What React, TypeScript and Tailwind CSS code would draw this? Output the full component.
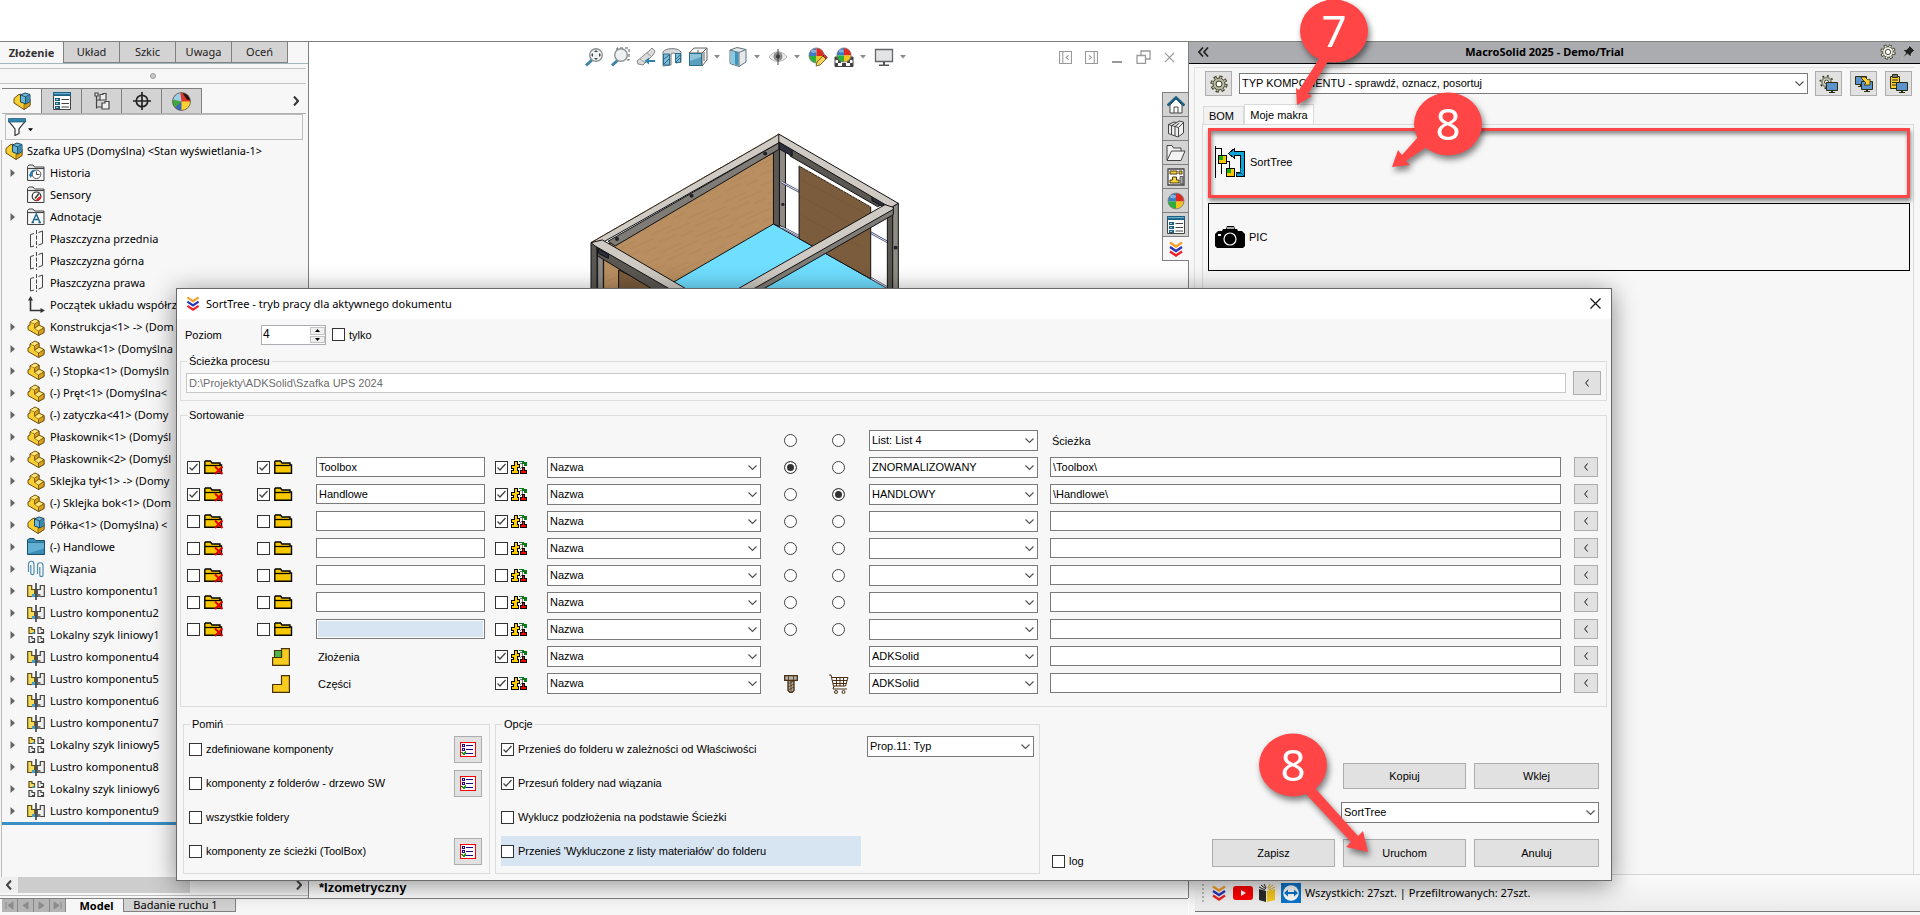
import type React from "react"
import { useState } from "react"

type IconProps = { className?: string }

interface TreeNode {
  label: string
  icon: React.ReactNode
  expandable?: boolean
}

interface SortRow {
  remove: boolean
  folder: boolean
  name: string
  sort: boolean
  mode: "" | "norm" | "trade"
  type: string
  path: string
}

/* ---------- icons ---------- */

const PartIcon = ({ className = "w-[18px] h-[18px]" }: IconProps) => (
  <svg viewBox="0 0 18 18" className={className} strokeLinejoin="round">
    <path d="M3 4 8 1l4 2v4l5 2.500v5L11.500 17.500 1 11.500V8l2-1z" fill="#f8cf33" stroke="#6a4b12" />
    <path d="M7.500 6 12 3v4l-4.500 3zM11.500 13 17 9.500v5l-5.500 3z" fill="#d9a21b" stroke="#6a4b12" strokeWidth=".8" />
    <path d="M3 4l4.500 2v4.500l4 2.500M7.500 10.500 12 7.500" fill="none" stroke="#8a671a" strokeWidth=".7" />
    <path d="M4 3.800 8 1.800l3 1.500-3.500 2zM8.500 10.500l3.500-2.400 3.500 1.700-4 2.400z" fill="#ffe680" />
  </svg>
)

const AssemblyIcon = ({ className = "w-[18px] h-[18px]" }: IconProps) => (
  <svg viewBox="0 0 18 18" className={className} strokeLinejoin="round">
    <path d="M1 6.500 5 3l3-1v8l4 1 5-4v6.500L11 17.500 1 11z" fill="#f8cf33" stroke="#6a4b12" />
    <path d="M11 12.500 17 9v4.500l-6 4z" fill="#d9a21b" stroke="#6a4b12" strokeWidth=".7" />
    <path d="M7.500 3 12 1l5 1.500v7L13 12l-5.500-2z" fill="#6bb5d6" stroke="#1d4a63" />
    <path d="M7.500 3l5 1.800L17 2.500M12.500 4.800V12" fill="none" stroke="#1d4a63" strokeWidth=".9" />
    <path d="M13 5.200 16.500 3.300v5.800L13 11.300z" fill="#3c87ac" />
  </svg>
)

const DocFolder = ({ children }: { children?: React.ReactNode }) => (
  <svg viewBox="0 0 18 18" className="w-[18px] h-[18px]">
    <path d="M.500 16.500V2.500L2 1h4l1.500 2H17v13.500z" fill="#e9e9e9" stroke="#444" />
    <path d="M.500 4.500H17" stroke="#444" />
    <path d="M2 6h14v9.500H2z" fill="#fafafa" />
    {children}
  </svg>
)

const HistoryIcon = () => (
  <DocFolder>
    <circle cx="9.500" cy="10.300" r="4.300" fill="#fff" stroke="#555" />
    <path d="M9.500 7.500v3h3" fill="none" stroke="#444" />
    <path d="M3.500 12c0-3 1.500-5 4-5.500" fill="none" stroke="#1f7bab" strokeWidth="1.800" />
    <path d="M1.700 10.500h4L3.700 14z" fill="#1f7bab" />
  </DocFolder>
)

const SensorIcon = () => (
  <DocFolder>
    <circle cx="9.500" cy="10.300" r="4.300" fill="#fff" stroke="#333" strokeWidth="1.200" />
    <path d="M13.800 10.300a4.300 4.300 0 0 1-4.300 4.300l.8-2z" fill="#e52520" stroke="#e52520" />
    <path d="M8 12.500l4-5" stroke="#333" strokeWidth="1.400" />
  </DocFolder>
)

const AnnotationIcon = () => (
  <DocFolder>
    <path d="M5.500 14.500 9.300 6l3.700 8.500M7 11.500h4.500M4.500 14.500h2.500M11.500 14.500h2.500" fill="none" stroke="#1f6a92" strokeWidth="1.500" />
  </DocFolder>
)

const PlaneIcon = () => (
  <svg viewBox="0 0 18 18" className="w-[18px] h-[18px]" fill="none" stroke="#444">
    <path d="M7 3.500 3.500 4.500v12.500l3.500-1M11.500 2.500l4-1.500v12.500l-4 1.500" />
    <path d="M9.500 0v18" strokeDasharray="4 1.500" />
  </svg>
)

const OriginIcon = () => (
  <svg viewBox="0 0 18 18" className="w-[18px] h-[18px]">
    <path d="M3.500 3v11.500H14" fill="none" stroke="#333" strokeWidth="1.600" />
    <path d="M3.500 0 6 4.500H1zM18 14.500 13.500 17v-5z" fill="#333" />
  </svg>
)

const BlueFolder = () => (
  <svg viewBox="0 0 18 18" className="w-[18px] h-[18px]">
    <path d="M.500 16.500V2L2 .500h5L8.500 2.500h9v14z" fill="#3b8db8" stroke="#1c4d68" />
    <path d="M1 4.500h16v6L1 15.500z" fill="#62b0d4" />
    <path d="M1 4.500h16" stroke="#1c4d68" strokeWidth=".6" />
  </svg>
)

const MatesIcon = () => (
  <svg viewBox="0 0 18 18" className="w-[18px] h-[18px]" fill="none" stroke="#4b8cab" strokeWidth="1.200">
    <path d="M1.500 12V4a2.500 2.500 0 0 1 5.500 0v9a1.600 1.600 0 0 1-3.200 0V5" />
    <path d="M10.500 14V5.500a2.500 2.500 0 0 1 5.500 0V15a1.600 1.600 0 0 1-3.200 0V7" />
  </svg>
)

const MirrorIcon = () => (
  <svg viewBox="0 0 18 18" className="w-[18px] h-[18px]">
    <path d="M.700 3.500h4v4h3v7h-7z" fill="#f7dc5c" stroke="#5a4a1a" strokeWidth="1.200" />
    <path d="M5 12h3v3H5z" fill="#3fa0d0" />
    <path d="M17.300 3.500h-4v4h-3v7h7z" fill="#efefef" stroke="#444" strokeWidth="1.200" />
    <path d="M10.500 12h3v3h-3z" fill="#777" />
    <path d="M9 1v17" stroke="#111" strokeWidth="1.300" />
  </svg>
)

const PatternIcon = () => (
  <svg viewBox="0 0 18 18" className="w-[18px] h-[18px]" strokeWidth="1.200">
    <path d="M2 1.500h3v2h2.500v4H2z" fill="#f7dc5c" stroke="#5a4a1a" />
    <path d="M5.500 6h2v2h-2z" fill="#3fa0d0" />
    <path d="M11 1.500h3v2h2.500v4H11zM2 10.500h3v2h2.500v4H2zM11 10.500h3v2h2.500v4H11z" fill="#eee" stroke="#444" />
    <path d="M14 6h2v1.500h-2zM5 15h2v1.500H5zM14 15h2v1.500h-2z" fill="#444" />
  </svg>
)

const PropertyIcon = () => (
  <svg viewBox="0 0 18 18" className="w-[18px] h-[18px]">
    <path d="M.500 .500h17v17H.500z" fill="#fff" stroke="#444" />
    <path d="M0 0h18v4H0z" fill="#1f5f82" />
    <path d="M1 1h16v1.200H1z" fill="#64b0d3" />
    <path d="M2 6h5v3H2zM2 10h5v3H2zM2 14h5v3H2z" fill="#1f5f82" />
    <path d="M3 7h2v1H3zM3 11h2v1H3zM3 15h2v1H3z" fill="#9ad2ec" />
    <path d="M8.500 7.500H16M8.500 11.500H16M8.500 15H16" stroke="#444" />
  </svg>
)

const ConfigIcon = () => (
  <svg viewBox="0 0 18 18" className="w-[18px] h-[18px]" fill="#eee" stroke="#444" strokeWidth="1.200">
    <path d="M3.500 4v12.500M3.500 8H7M3.500 15H9" fill="none" />
    <path d="M2 1h3v3H2zM7 2.500h3v-1h3V8H7zM9 11h3v-1.500h4V17H9z" />
  </svg>
)

const TargetIcon = () => (
  <svg viewBox="0 0 18 18" className="w-[18px] h-[18px]" fill="none" stroke="#222" strokeWidth="1.700">
    <circle cx="9" cy="9" r="5.700" />
    <path d="M9 0v18M0 9h18" />
  </svg>
)

const BallIcon = ({ className = "w-[18px] h-[18px]" }: IconProps) => (
  <svg viewBox="0 0 18 18" className={className}>
    <path d="M9 9.500V1a8 8 0 0 0-8 8.500z" fill="#3a7cc4" />
    <path d="M9 9.500h8A8 8 0 0 0 9 1z" fill="#e02a20" />
    <path d="M9 9.500H1A8 8 0 0 0 9 17z" fill="#2fae3a" />
    <path d="M9 9.500V17a8 8 0 0 0 8-7.500z" fill="#f2c21f" />
    <circle cx="9" cy="9" r="8" fill="none" stroke="#777" strokeWidth=".8" />
    <ellipse cx="6" cy="4.500" rx="3" ry="1.800" fill="#fff" opacity=".4" />
  </svg>
)

const DarkBallIcon = () => (
  <svg viewBox="0 0 18 18" className="w-[19px] h-[19px]">
    <circle cx="9" cy="9" r="8.500" fill="#e3372c" />
    <path d="M9 9 1 6.500A8.500 8.500 0 0 0 3 15z" fill="#3caa3f" />
    <path d="M9 9 3 15a8.500 8.500 0 0 0 6 2.500z" fill="#2e6fbf" />
    <path d="M9 9v8.500A8.500 8.500 0 0 0 17.500 9z" fill="#f7d333" />
    <path d="M1 7a8.500 8.500 0 0 1 7-6.400L9 9z" fill="#9ad0ea" />
    <path d="M10 1c4 0 7 3.500 7 7l-3-1z" fill="#2a1414" />
    <circle cx="9" cy="9" r="8.500" fill="none" stroke="#555" strokeWidth=".7" />
  </svg>
)

const FunnelIcon = () => (
  <svg viewBox="0 0 18 18" className="w-[18px] h-[18px]">
    <path d="M1 3.500h16L11 11v4.500l-4 2V11z" fill="#fff" stroke="#333" strokeWidth="1.200" />
    <path d="M.500 .500h17v3.500H.500z" fill="#2f86ac" stroke="#1d4f68" strokeWidth=".7" />
  </svg>
)

const LogoIcon = ({ className = "w-[14px] h-[14px]" }: IconProps) => (
  <svg viewBox="0 0 14 16" className={className} fill="none" strokeWidth="2.400">
    <path d="M1 1.500l6 4 6-4" stroke="#f7a02b" />
    <path d="M1 6l6 4 6-4" stroke="#2b35b8" />
    <path d="M1 10.500l6 4 6-4" stroke="#ee2222" />
  </svg>
)

const YellowFolder = ({ crossed = false }: { crossed?: boolean }) => (
  <svg viewBox="0 0 19 15" className="w-[19px] h-[15px]">
    <path d="M.800 13.200V1.800L1.500 1h5l1.500 2h8v2h1.500v8.200z" fill="#f7c800" stroke="#000" strokeWidth="1.400" />
    <path d="M1 5.500h15" stroke="#000" strokeWidth="1.300" />
    {crossed && <path d="M11 6.500l7.500 7.500M18.500 6.500l-7.500 7.500" stroke="#e00000" strokeWidth="2" />}
  </svg>
)

const SortIcon = () => (
  <svg viewBox="0 0 17 14" className="w-[17px] h-[14px]" shapeRendering="crispEdges">
    <path d="M3.500 1.500h3v3h2v3h-2v3h1v3h-7v-3h2V8h-2V5h3z" fill="#fc0" stroke="#000" />
    <path d="M8 1h5v1h3v4h-3V4h-2V2H8z" fill="#0a7a1a" />
    <path d="M9 3c2 0 3 2 2 4l-2 2" fill="none" stroke="#777" />
    <path d="M11.500 7.500h2v3h2v3h-6v-3h2z" fill="#f00" stroke="#000" />
  </svg>
)

const ListCheckIcon = () => (
  <svg viewBox="0 0 16 15" className="w-[16px] h-[15px]" shapeRendering="crispEdges">
    <path d="M.500 .500h15v14H.500z" fill="#fff" stroke="#f00" />
    <path d="M2.500 2.500h2v2h-2zM2.500 6.500h2v2h-2z" fill="none" stroke="#208" />
    <path d="M6 3.500h7M6 7.500h7M6 11.500h7" stroke="#208" />
    <path d="M2 10l2 2.500 2-3" fill="none" stroke="#1a9a1a" strokeWidth="1.500" />
  </svg>
)

const BoltIcon = () => (
  <svg viewBox="0 0 14 18" className="w-[14px] h-[18px]">
    <path d="M.700 .700h12.600v4.600H.700zM4 5.500h6v10l-2 2H6l-2-2z" fill="#b5b0a6" stroke="#4a2f14" strokeWidth="1.300" />
    <path d="M4.500 1v4M9.500 1v4M4 9l6-3M4 12l6-3M4 15l6-3M7 6v11" stroke="#4a2f14" strokeWidth=".8" />
  </svg>
)

const CartIcon = () => (
  <svg viewBox="0 0 20 20" className="w-[20px] h-[20px]" fill="none" stroke="#4a2f14">
    <path d="M0 1h2l2.500 11h12L19 3.500H3M3.500 6.500H18M4 9.500h13.500M7.500 3.500V12M11 3.500V12M14.500 3.500V12M5 12l-1 3h14" />
    <circle cx="7" cy="18" r="1.500" />
    <circle cx="14.500" cy="18" r="1.500" />
  </svg>
)

const GearIcon = ({ className = "w-[18px] h-[18px]", fill = "#b8b8a8" }: IconProps & { fill?: string }) => (
  <svg viewBox="-9 -9 18 18" className={className}>
    <circle r="6.800" fill="none" stroke="#3a3a1c" strokeWidth="3.600" strokeDasharray="3 2.340" />
    <circle r="6" fill={fill} stroke="#3a3a1c" />
    <circle r="6.600" fill="none" stroke={fill} strokeWidth="2" strokeDasharray="1.800 3.380" strokeDashoffset="-.6" />
    <circle r="3" fill="#fff" stroke="#3a3a1c" />
  </svg>
)

const Monitor = ({ x, y }: { x: number; y: number }) => (
  <g transform={`translate(${x} ${y})`}>
    <path d="M.500 .500h11v8H.500z" fill="#5b93cc" stroke="#2c2c10" />
    <path d="M5 9h2v1h2v1H3v-1h2z" fill="#2c2c10" />
  </g>
)

const MonitorGear = () => (
  <svg viewBox="0 0 20 20" className="w-[20px] h-[20px]">
    <circle cx="7.500" cy="8" r="5.500" fill="none" stroke="#3a3a1c" strokeWidth="3" strokeDasharray="1.600 2.700" />
    <circle cx="7.500" cy="8" r="4.500" fill="#ddd" stroke="#8d8d78" strokeWidth="2" />
    <circle cx="7.500" cy="8" r="2" fill="#fff" stroke="#3a3a1c" />
    <Monitor x={7} y={8} />
  </svg>
)

const MonitorCopy = () => (
  <svg viewBox="0 0 20 20" className="w-[20px] h-[20px]">
    <Monitor x={1} y={2} />
    <Monitor x={7} y={7} />
    <path d="M7 3h4l3 3 2-1v6h-6l2-2-4-4z" fill="#ffcf30" stroke="#2c2c10" strokeWidth=".8" />
  </svg>
)

const MonitorPaste = () => (
  <svg viewBox="0 0 20 20" className="w-[20px] h-[20px]">
    <path d="M1.500 2.500h9v12h-9z" fill="#ffcf30" stroke="#2c2c10" />
    <path d="M3.500 .500h5v3h-5z" fill="#777" stroke="#2c2c10" />
    <path d="M3 6h6M3 8.500h5M3 11h4" stroke="#2c2c10" />
    <Monitor x={7} y={8} />
  </svg>
)

const SortTreeIcon = () => (
  <svg viewBox="0 0 32 32" className="w-[32px] h-[32px]" shapeRendering="crispEdges">
    <path d="M1.500 0v32M1.500 2.500h6v25M8 15.500h7.500V22" fill="none" stroke="#000" />
    <path d="M4.500 9.500h8v8h-8zM12.500 22.500h8v8h-8z" fill="#f7c800" stroke="#000" />
    <path d="M5 10h4v4H5zM13 23h4v4h-4z" fill="#10b010" />
    <path d="M14.500 7.500l6-5v3h10v25h-8v-4h4V9.500h-6v3z" fill="#0fa5d6" stroke="#000" />
    <path d="M26 22v5h-4M26 26l4 4" fill="none" stroke="#06607e" />
  </svg>
)

const CameraIcon = () => (
  <svg viewBox="0 0 30 22" className="w-[30px] h-[22px]">
    <path d="M3 5h4l1-2h3l1-3h7l1 3h2l1 2h4l3 3v12l-2 2H2l-2-2V8z" />
    <path d="M12 2h7" stroke="#fff" strokeWidth="1.300" />
    <circle cx="15" cy="13" r="6" fill="none" stroke="#fff" strokeWidth="1.200" />
    <path d="M3 8h3v2H3z" fill="#fff" />
  </svg>
)

/* ---------- viewport toolbar ---------- */

const Caret = () => (
  <svg viewBox="0 0 6 4" className="mr-[2px] w-[6px] h-[4px]">
    <path d="M0 0h6L3 3.500z" fill="#8a8a8a" />
  </svg>
)

const ZoomIcon = ({ area = false }: { area?: boolean }) => (
  <svg viewBox="0 0 20 20" className="w-[20px] h-[20px]">
    <path d="M9 12 2 18.500" stroke="#3f83a6" strokeWidth="3" />
    {area && <path d="M7 3V1h12v12h-2" fill="none" stroke="#555" strokeDasharray="3 2" />}
    <circle cx={area ? 11 : 12} cy="8" r="6.300" fill="#edf1f2" stroke="#8b9397" strokeWidth="1.400" />
    {!area && <path d="M12 3l2 2h-4zM12 13l2-2h-4zM7 8l2-2v4zM17 8l-2-2v4z" fill="#444" />}
  </svg>
)

const PrevViewIcon = () => (
  <svg viewBox="0 0 20 20" className="w-[20px] h-[20px]">
    <path d="M1 14 13 4l3-3 3 3-2 4L7 18l-5-1z" fill="#dcdcdc" stroke="#888" />
    <path d="M4 12l5 4M11 6l5 4" stroke="#999" />
    <path d="M19 13h-6v-2.500L8.500 14l4.500 3.500V15h6z" fill="#2d83ad" />
  </svg>
)

const SectionIcon = () => (
  <svg viewBox="0 0 20 20" className="w-[20px] h-[20px]">
    <path d="M1 5c2-4 15-5 18 0v10l-5 1V7c-1-1-4-1-5 0v11l-8 1z" fill="#d6d9db" stroke="#777" />
    <path d="M1.500 7h6v11h-6zM13.500 6.500h5v9h-5z" fill="#7dbbd6" stroke="#2d6d8c" />
    <path d="M2 12l5-4M2 17l5-5M14 12l4-4M14 15l4-4" stroke="#2d6d8c" />
  </svg>
)

const OrientationIcon = () => (
  <svg viewBox="0 0 20 20" className="w-[20px] h-[20px]">
    <path d="M6 1h13v12l-5 6V6H1z" fill="#f4f4f4" stroke="#666" />
    <path d="M1 6l5-5M14 6l5-5M10 3v6M16 5v9" stroke="#666" />
    <path d="M1.500 6.500h12v12h-12z" fill="#5b9fbf" stroke="#2d6d8c" />
    <path d="M2 7h11v3L2 14z" fill="#8fc4db" />
  </svg>
)

const DisplayIcon = () => (
  <svg viewBox="0 0 20 20" className="w-[20px] h-[20px]">
    <path d="M2 3l7-2.500 9 2v12.500l-7 4.500-9-3z" fill="#e6e8e9" stroke="#5f7480" />
    <path d="M2.500 3.500 10 5.500v13L2.500 16z" fill="#8cc8de" />
    <path d="M7 4.800l3.500 .8v13l-3.500-1z" fill="#3b94ba" />
    <path d="M2 3l9 2.500 7-3M11 5.500v14" fill="none" stroke="#5f7480" />
  </svg>
)

const EyeIcon = () => (
  <svg viewBox="0 0 20 20" className="w-[20px] h-[20px]">
    <path d="M1 10c5-7 13-7 18 0-5 6-13 6-18 0z" fill="#ededed" stroke="#b5b5b5" />
    <circle cx="10" cy="9.500" r="4.500" fill="#8c8c8c" />
    <circle cx="10" cy="9.500" r="2" fill="#333" />
    <path d="M10 2v16" stroke="#444" />
  </svg>
)

const AppearanceIcon = () => (
  <span className="relative block w-[20px] h-[20px]">
    <BallIcon className="w-[17px] h-[17px]" />
    <svg viewBox="0 0 20 20" className="absolute inset-0 w-[20px] h-[20px]">
      <path d="M8 19l1-4 6-6 3 3-6 6z" fill="#f6d257" stroke="#5a4a1a" strokeWidth=".8" />
      <path d="M15 9l1.500-1.500 3 3L18 12z" fill="#d9382c" stroke="#5a1a1a" strokeWidth=".6" />
    </svg>
  </span>
)

const SceneIcon = () => (
  <span className="relative block w-[20px] h-[20px]">
    <svg viewBox="0 0 20 20" className="absolute inset-0 w-[20px] h-[20px]">
      <path d="M1 10h18v9.500H1z" fill="#fff" stroke="#444" />
      <path d="M1 10h4v3H1zM15 10h4v3h-4zM4 13h3v3H4zM13 13h3v3h-3zM1 16h3v3H1zM8 16h4v3H8zM16 16h3v3h-3z" fill="#444" />
    </svg>
    <BallIcon className="relative mx-auto w-[16px] h-[16px]" />
  </span>
)

const ScreenIcon = () => (
  <svg viewBox="0 0 20 20" className="w-[20px] h-[20px]">
    <path d="M1.500 2.500h17v12h-17z" fill="#e2e4e6" stroke="#666" strokeWidth="1.300" />
    <path d="M9 15h2v2.500h4V19H5v-1.500h4z" fill="#555" />
  </svg>
)

/* ---------- side strip icons ---------- */

const HomeIcon = () => (
  <svg viewBox="0 0 18 18" className="w-[18px] h-[18px]">
    <path d="M3 9v8h12V9L9 3z" fill="#fff" stroke="#444" />
    <path d="M7 17v-6h4v6" fill="none" stroke="#444" />
    <path d="M.500 9.500 9 1.500l8.500 8" fill="none" stroke="#1f5f82" strokeWidth="2.600" />
  </svg>
)

const BooksIcon = () => (
  <svg viewBox="0 0 18 18" className="w-[18px] h-[18px]" fill="#eee" stroke="#444">
    <path d="M1.500 4.500 7 2l3 .5L12 1l4.500 1V13L11 17 1.500 13.500z" />
    <path d="M1.500 4.500 4.500 5.500v9M4.500 5.500 10 2.500M4.500 5.500l3.500 1V16M8 6.500l4.500-3.500M8 6.500l3.500 1V17M11.500 7.500l5-5" fill="none" />
  </svg>
)

const OpenFolderIcon = () => (
  <svg viewBox="0 0 20 18" className="w-[20px] h-[18px]" fill="#f3f3f3" stroke="#444">
    <path d="M1 16V1.500h5L7.500 4H15v3" />
    <path d="M1 16.500 5.500 7H19l-4 9.500z" />
  </svg>
)

const PaletteIcon = () => (
  <svg viewBox="0 0 18 18" className="w-[18px] h-[18px]">
    <path d="M1 1h16v16H1z" fill="#fff" stroke="#444" strokeWidth="1.300" />
    <path d="M3 3h7v3H3zM12 3h3v3h-3zM3 15v-3h2.500V9h4v3H12v3z" fill="#f7d333" stroke="#4a3a12" />
    <path d="M13 8.500h3V16h-3z" fill="#aaa" stroke="#444" strokeWidth=".8" />
  </svg>
)

/* ---------- form controls ---------- */

const CheckBox = ({ checked = false, label }: { checked?: boolean; label?: string }) => (
  <span className="relative block w-[13px] h-[13px] shrink-0">
    <input
      type="checkbox"
      defaultChecked={checked}
      aria-label={label}
      className="peer block w-[13px] h-[13px] appearance-none border border-[#333] bg-white"
    />
    <svg
      viewBox="0 0 13 13"
      className="pointer-events-none absolute inset-0 hidden w-[13px] h-[13px] peer-checked:block"
      fill="none"
      stroke="#444"
      strokeWidth="1.300"
    >
      <path d="M2.500 6.500 5 9l5.500-6" />
    </svg>
  </span>
)

const Radio = ({ name, checked = false, label }: { name: string; checked?: boolean; label: string }) => (
  <input
    type="radio"
    name={name}
    defaultChecked={checked}
    aria-label={label}
    className="block w-[13px] h-[13px] appearance-none rounded-full border border-[#444] bg-white checked:bg-[#333] checked:shadow-[inset_0_0_0_2px_#fff]"
  />
)

const Combo = ({ value, label, className = "" }: { value: string; label: string; className?: string }) => (
  <span className={`relative block ${className}`}>
    <select
      aria-label={label}
      defaultValue={value}
      className="block h-[21px] w-full appearance-none border border-[#7a7a7a] bg-white pl-[2px] pb-[2px] text-[11px] leading-[16px] text-black"
    >
      <option>{value}</option>
    </select>
    <svg
      viewBox="0 0 9 6"
      className="pointer-events-none absolute right-[4px] top-[8px] w-[9px] h-[6px]"
      fill="none"
      stroke="#555"
      strokeWidth="1.200"
    >
      <path d="M.500 .500l4 4 4-4" />
    </svg>
  </span>
)

const PushButton = ({ children, className = "", label }: { children: React.ReactNode; className?: string; label?: string }) => (
  <button
    type="button"
    aria-label={label}
    className={`flex items-center justify-center border border-[#adadad] bg-[#e1e1e1] text-[11px] hover:bg-[#e5f1fb] ${className}`}
  >
    {children}
  </button>
)

const LessThan = () => (
  <svg viewBox="0 0 4 8" className="w-[4px] h-[8px]" fill="none" stroke="#111">
    <path d="M3.500 .500 .700 4l2.800 3.500" />
  </svg>
)

const Group = ({ title, className = "", children }: { title: string; className?: string; children: React.ReactNode }) => (
  <fieldset className={`min-w-0 border border-[#dcdcdc] ${className}`}>
    <legend className="ml-[6px] px-[2px] text-[11px] leading-[14px]">{title}</legend>
    {children}
  </fieldset>
)

/* ---------- left panel ---------- */

const tree: TreeNode[] = [
  { label: "Historia", icon: <HistoryIcon />, expandable: true },
  { label: "Sensory", icon: <SensorIcon /> },
  { label: "Adnotacje", icon: <AnnotationIcon />, expandable: true },
  { label: "Płaszczyzna przednia", icon: <PlaneIcon /> },
  { label: "Płaszczyzna górna", icon: <PlaneIcon /> },
  { label: "Płaszczyzna prawa", icon: <PlaneIcon /> },
  { label: "Początek układu współrz", icon: <OriginIcon /> },
  { label: "Konstrukcja<1> -> (Dom", icon: <PartIcon />, expandable: true },
  { label: "Wstawka<1> (Domyślna", icon: <PartIcon />, expandable: true },
  { label: "(-) Stopka<1> (Domyśln", icon: <PartIcon />, expandable: true },
  { label: "(-) Pręt<1> (Domyślna<", icon: <PartIcon />, expandable: true },
  { label: "(-) zatyczka<41> (Domy", icon: <PartIcon />, expandable: true },
  { label: "Płaskownik<1> (Domyśl", icon: <PartIcon />, expandable: true },
  { label: "Płaskownik<2> (Domyśl", icon: <PartIcon />, expandable: true },
  { label: "Sklejka tył<1> -> (Domy", icon: <PartIcon />, expandable: true },
  { label: "(-) Sklejka bok<1> (Dom", icon: <PartIcon />, expandable: true },
  { label: "Półka<1> (Domyślna) <", icon: <AssemblyIcon />, expandable: true },
  { label: "(-) Handlowe", icon: <BlueFolder />, expandable: true },
  { label: "Wiązania", icon: <MatesIcon />, expandable: true },
  { label: "Lustro komponentu1", icon: <MirrorIcon />, expandable: true },
  { label: "Lustro komponentu2", icon: <MirrorIcon />, expandable: true },
  { label: "Lokalny szyk liniowy1", icon: <PatternIcon />, expandable: true },
  { label: "Lustro komponentu4", icon: <MirrorIcon />, expandable: true },
  { label: "Lustro komponentu5", icon: <MirrorIcon />, expandable: true },
  { label: "Lustro komponentu6", icon: <MirrorIcon />, expandable: true },
  { label: "Lustro komponentu7", icon: <MirrorIcon />, expandable: true },
  { label: "Lokalny szyk liniowy5", icon: <PatternIcon />, expandable: true },
  { label: "Lustro komponentu8", icon: <MirrorIcon />, expandable: true },
  { label: "Lokalny szyk liniowy6", icon: <PatternIcon />, expandable: true },
  { label: "Lustro komponentu9", icon: <MirrorIcon />, expandable: true },
]

const featureTabs = [
  { name: "Drzewo", icon: <AssemblyIcon /> },
  { name: "Właściwości", icon: <PropertyIcon /> },
  { name: "Konfiguracje", icon: <ConfigIcon /> },
  { name: "Wymiary", icon: <TargetIcon /> },
  { name: "Wygląd", icon: <DarkBallIcon /> },
]

const LeftPanel = () => {
  const [tab, setTab] = useState("Złożenie")

  return (
    <aside className="flex w-[309px] shrink-0 flex-col border-r border-[#808080] bg-[#f7f7f7]">
      <div className="flex h-[22px] border-b border-[#9fb8bc]">
        {["Złożenie", "Układ", "Szkic", "Uwaga", "Oceń"].map((name) => (
          <button
            key={name}
            type="button"
            onClick={() => setTab(name)}
            className={`border-r border-[#808080] text-center ${
              tab === name ? "w-[64px] bg-[#f7f7f7] font-bold text-[#333]" : "w-[56px] border-b bg-[#d3d3d3] text-[#222]"
            }`}
          >
            {name}
          </button>
        ))}
      </div>
      <div className="mt-[4px] mr-[2px] flex h-[16px] items-center justify-center border-y border-[#c4c4c4]">
        <span className="h-[6px] w-[6px] rounded-full border border-[#999] bg-[#ccc]" />
      </div>
      <div className="mt-[4px] ml-[2px] mr-[2px] flex h-[26px] border-b border-[#b0b0b0]">
        {featureTabs.map((item, i) => (
          <button
            key={item.name}
            type="button"
            aria-label={item.name}
            className={`flex w-[40px] items-center justify-center border-t border-r border-[#808080] ${
              i === 0 ? "bg-[#f7f7f7]" : "bg-[#d3d3d3]"
            }`}
          >
            {item.icon}
          </button>
        ))}
        <button type="button" aria-label="Więcej" className="mr-[7px] ml-auto">
          <svg viewBox="0 0 6 10" className="w-[6px] h-[10px]" fill="none" stroke="#333" strokeWidth="2">
            <path d="M1 .500 5 5 1 9.500" />
          </svg>
        </button>
      </div>
      <div className="mx-[5px] flex h-[26px] items-center gap-[2px] border border-[#bdbdbd] pl-[2px]">
        <FunnelIcon />
        <svg viewBox="0 0 6 4" className="mt-[6px] w-[5px] h-[4px]">
          <path d="M0 0h6L3 3.500z" />
        </svg>
      </div>

      <div className="ml-px flex-1 border-l border-[#bbb]">
        <div className="flex h-[22px] items-center gap-[4px] pl-[3px] whitespace-nowrap">
          <AssemblyIcon />
          Szafka UPS (Domyślna) &lt;Stan wyświetlania-1&gt;
        </div>
        <ul className="mr-[132px] overflow-hidden">
          {tree.map((node) => (
            <li key={node.label} className="flex h-[22px] items-center pl-[8px] whitespace-nowrap">
              <span className="w-[17px] shrink-0">
                {node.expandable && (
                  <svg viewBox="0 0 5 8" className="w-[5px] h-[8px]">
                    <path d="M.500 0v8L5 4z" fill="#666" />
                  </svg>
                )}
              </span>
              <span className="shrink-0">{node.icon}</span>
              <span className="ml-[5px]">{node.label}</span>
            </li>
          ))}
        </ul>
        <div className="h-[3px] bg-[#3a8fc4]" />
      </div>

      <div className="mb-[2px] flex h-[16px] items-center bg-[#efefef] px-[6px]">
        <svg viewBox="0 0 6 10" className="w-[6px] h-[10px]" fill="none" stroke="#444" strokeWidth="2">
          <path d="M5 .500 1 5l4 4.500" />
        </svg>
        <span className="ml-[6px] h-[16px] w-[172px] bg-[#cdcdcd]" />
        <svg viewBox="0 0 6 10" className="ml-auto w-[6px] h-[10px]" fill="none" stroke="#444" strokeWidth="2">
          <path d="M1 .500 5 5 1 9.500" />
        </svg>
      </div>
      <div className="h-[3px] border-t border-[#bdbdbd]" />
    </aside>
  )
}

/* ---------- 3D model ---------- */

const CabinetModel = () => (
  <svg viewBox="80 300 940 477" className="w-[313px] h-[159px]" stroke="#111" strokeWidth="3">
    <defs>
      <pattern id="wood" width="120" height="60" patternUnits="userSpaceOnUse" patternTransform="rotate(-24)">
        <path d="M0 0h120v60H0z" fill="#b98f61" stroke="none" />
        <path d="M0 12h70M40 26h80M10 42h60M80 52h40" stroke="#b2875a" strokeWidth="3" />
      </pattern>
    </defs>
    <path d="M130 650 645 365v220L310 777H130z" fill="url(#wood)" />
    <path d="M640 582 985 777H305z" fill="#70deff" />
    <path d="M640 345h18v245l-18-8z" fill="#5b5753" />
    <path d="M658 340h18v255l-18-9z" fill="#8e8a85" />
    <g stroke="#444a66" strokeWidth="7">
      <path d="M666 457l52 28M666 592l52 27M932 608l52 29M932 744l52 30" />
      <path d="M666 457l52 28M666 592l52 27M932 608l52 29M932 744l52 30" stroke="#e3e6fa" strokeWidth="3" />
    </g>
    <path d="M717 408 932 531v216L717 626z" fill="#7b5c3d" />
    <path d="M718 408 932 531" stroke="#d8a868" strokeWidth="2" strokeDasharray="5 5" />
    <path d="M725 450l190 100M722 500l200 105M722 555l180 95" stroke="#735539" strokeWidth="2" />
    <path d="M690 350 978 518l-25 12L690 378z" fill="#5b5753" />
    <path d="M656 336l40 22v20l-40-22zM936 498l36 20v14l-36-20z" fill="#2c2f3d" />
    <path d="M656 312 1015 520l-22 14L640 326z" fill="#cfcac3" />
    <path d="M656 338v20L165 648l-22-14z" fill="#7f7b76" />
    <path d="M656 312v26L112 646l-20-8 552-318z" fill="#cfcac3" />
    <path d="M656 312 92 638" stroke="#6a4722" strokeDasharray="4 4" />
    <path d="M982 540h17v237h-17z" fill="#5b5753" />
    <path d="M998 530l17-10v257h-17z" fill="#8e8a85" />
    <path d="M1000 532v22L610 777h-60z" fill="#7f7b76" />
    <path d="M975 524l25 8v6L580 777h-47z" fill="#cfcac3" />
    <path d="M92 638h18v139H92z" fill="#5b5753" />
    <path d="M112 660h17v117h-17z" fill="#8e8a85" />
    <path d="M175 720 290 777H175z" fill="#7b5c3d" />
    <path d="M110 645 345 777h-70L112 678z" fill="#5b5753" />
    <path d="M112 655l32 18v12l-28-14z" fill="#2c2f3d" />
    <path d="M92 638l34-8 252 147h-50L104 648z" fill="#cfcac3" />
    <g fill="#222" stroke="none">
      <circle cx="615" cy="370" r="6" />
      <circle cx="394" cy="497" r="6" />
      <circle cx="170" cy="627" r="6" />
      <circle cx="668" cy="523" r="5" />
      <circle cx="1007" cy="653" r="6" />
    </g>
  </svg>
)

const Viewport = () => (
  <main className="relative min-w-0 flex-1 border-r border-[#808080] bg-white">
    <div className="flex h-[30px] items-center pl-[275px]">
      <div className="flex items-center gap-[6px]">
        <ZoomIcon />
        <ZoomIcon area />
        <PrevViewIcon />
        <SectionIcon />
        <OrientationIcon />
        <Caret />
        <DisplayIcon />
        <Caret />
        <EyeIcon />
        <Caret />
        <AppearanceIcon />
        <SceneIcon />
        <Caret />
        <ScreenIcon />
        <Caret />
      </div>
      <div className="mr-[13px] ml-auto flex items-center gap-[13px]">
        <svg viewBox="0 0 12 12" className="w-[13px] h-[13px]" fill="none" stroke="#999">
          <path d="M.500 .500h11v11H.500zM3.500 1v10M9 4 6.500 6 9 8" />
        </svg>
        <svg viewBox="0 0 12 12" className="w-[13px] h-[13px]" fill="none" stroke="#999">
          <path d="M.500 .500h11v11H.500zM8.500 1v10M3.500 4 6 6 3.500 8" />
        </svg>
        <svg viewBox="0 0 12 12" className="w-[12px] h-[12px]" stroke="#999" strokeWidth="2">
          <path d="M1 11h10" />
        </svg>
        <svg viewBox="0 0 15 14" className="w-[15px] h-[14px]" fill="none" stroke="#999" strokeWidth="1.300">
          <path d="M1 5.500h8.500v8H1zM5 5V1h9v8h-4" />
        </svg>
        <svg viewBox="0 0 12 12" className="w-[11px] h-[11px]" stroke="#999" strokeWidth="1.400">
          <path d="M1 1l10 10M11 1 1 11" />
        </svg>
      </div>
    </div>
    <div className="flex justify-center pt-[58px] pr-[11px]">
      <CabinetModel />
    </div>
    <nav className="absolute top-[50px] right-0 w-[26px] border-t border-l border-[#808080]">
      {[<HomeIcon />, <BooksIcon />, <OpenFolderIcon />, <PaletteIcon />, <BallIcon />, <PropertyIcon />].map((icon, i) => (
        <button key={i} type="button" aria-label={`Panel ${i + 1}`} className="flex h-[24px] w-[25px] items-center justify-center border-b border-[#808080] bg-[#d3d3d3]">
          {icon}
        </button>
      ))}
      <button type="button" aria-label="MacroSolid" className="flex h-[24px] w-[26px] items-center justify-center border-b border-[#808080] bg-[#f7f7f7]">
        <LogoIcon className="w-[14px] h-[18px]" />
      </button>
    </nav>
    <p className="absolute bottom-0 left-[10px] font-['Liberation_Sans',sans-serif] text-[13px] leading-[20px] font-bold">*Izometryczny</p>
  </main>
)

/* ---------- right panel ---------- */

const RightPanel = () => (
  <section className="flex w-[731px] shrink-0 flex-col bg-[#f7f7f7]">
    <header className="flex h-[22px] items-center border-b border-black bg-[#abacb0] pr-[5px] pb-px pl-[9px]">
      <svg viewBox="0 0 11 10" className="w-[11px] h-[10px]" fill="none" stroke="#222" strokeWidth="1.700">
        <path d="M5 .500 1 5l4 4.500M10 .500 6 5l4 4.500" />
      </svg>
      <h1 className="flex-1 text-center font-bold">MacroSolid 2025 - Demo/Trial</h1>
      <GearIcon className="w-[16px] h-[16px]" fill="#eee" />
      <svg viewBox="0 0 14 14" className="ml-[5px] w-[14px] h-[14px]">
        <path d="M8 0l6 6-2 .500-2 2.500v3L6.500 9 1 13.500 5 8 2 4.500h3.500L8 2z" fill="#222" stroke="#ddd" strokeWidth=".5" />
      </svg>
    </header>
    <div className="mt-[3px] mr-[6px] ml-[5px] flex flex-1 flex-col border-t border-l border-[#e2e2e2] pt-[3px] pl-[7px] font-['Liberation_Sans',sans-serif] text-[11px]">
      <div className="flex items-center pr-[2px] pl-[3px]">
        <PushButton className="h-[25px] w-[27px]" label="Ustawienia">
          <GearIcon />
        </PushButton>
        <Combo label="Makro" value="TYP KOMPONENTU - sprawdź, oznacz, posortuj" className="ml-[7px] flex-1" />
        <div className="ml-[7px] flex gap-[8px]">
          <PushButton className="h-[25px] w-[27px]" label="Konfiguruj">
            <MonitorGear />
          </PushButton>
          <PushButton className="h-[25px] w-[27px]" label="Kopiuj ustawienia">
            <MonitorCopy />
          </PushButton>
          <PushButton className="h-[25px] w-[27px]" label="Wklej ustawienia">
            <MonitorPaste />
          </PushButton>
        </div>
      </div>
      <div className="mt-[8px] flex items-end pl-px">
        <button type="button" className="h-[18px] w-[41px] border border-b-0 border-[#dadada] bg-[#f2f2f2] pr-[4px]">
          BOM
        </button>
        <button type="button" className="h-[20px] w-[70px] border border-b-0 border-[#dadada] bg-white">
          Moje makra
        </button>
      </div>
      <div className="flex-1 border border-b-0 border-[#dadada] bg-[#f7f7f7] py-[3px] pr-[3px] pl-[5px]">
        <button
          type="button"
          className="flex h-[70px] w-full items-center gap-[4px] border-[3px] border-[#ff4545] px-[3px] pb-[2px] shadow-[1px_3px_4px_rgba(0,0,0,0.45),inset_1px_3px_4px_rgba(0,0,0,0.45)]"
        >
          <SortTreeIcon />
          SortTree
        </button>
        <button type="button" className="mt-[5px] flex h-[68px] w-full items-center gap-[4px] border border-black px-[6px] pb-px">
          <CameraIcon />
          PIC
        </button>
      </div>
    </div>
    <footer className="mb-[3px] ml-[6px] flex h-[38px] items-center gap-[4px] border-t border-b border-t-[#d5d5d5] border-b-[#777] bg-linear-to-b from-[#fafafa] to-[#ececec] pl-[7px]">
      <span className="h-[18px] w-[3px] border-l-2 border-dotted border-[#bbb]" />
      <LogoIcon className="mx-[3px] w-[14px] h-[18px]" />
      <svg viewBox="0 0 20 14" className="w-[20px] h-[14px]">
        <rect width="20" height="14" rx="3" fill="#f00" />
        <path d="M8 4v6l5-3z" fill="#fff" />
      </svg>
      <svg viewBox="0 0 18 18" className="mx-px w-[18px] h-[18px]">
        <path d="M1 5l7 2v11l-7-2z" fill="#2b2b2b" />
        <path d="M17 5 9 7v11l8-2z" fill="#f4cb1d" />
        <path d="M3 1l5 4M1 3l6 3M6 0l2 4" stroke="#222" />
        <path d="M15 1l-5 4M17 3l-6 3M12 0l-2 4" stroke="#d5ab10" />
      </svg>
      <svg viewBox="0 0 20 20" className="w-[20px] h-[20px]">
        <rect width="20" height="20" fill="#0c76cf" />
        <circle cx="10" cy="10" r="7.800" fill="#fff" />
        <path d="M3 10l4-3.500V9h6V6.500l4 3.500-4 3.500V11H7v2.500z" fill="#0c76cf" />
      </svg>
      <span>Wszystkich: 27szt. | Przefiltrowanych: 27szt.</span>
    </footer>
  </section>
)

/* ---------- SortTree dialog ---------- */

const emptyRow: SortRow = { remove: false, folder: false, name: "", sort: false, mode: "", type: "", path: "" }

const sortRows: SortRow[] = [
  { remove: true, folder: true, name: "Toolbox", sort: true, mode: "norm", type: "ZNORMALIZOWANY", path: "\\Toolbox\\" },
  { remove: true, folder: true, name: "Handlowe", sort: true, mode: "trade", type: "HANDLOWY", path: "\\Handlowe\\" },
  { ...emptyRow, sort: true },
  emptyRow,
  emptyRow,
  emptyRow,
  emptyRow,
]

const rowGrid = "grid h-[27px] grid-cols-[70px_59px_179px_52px_237px_48px_37px_181px_1fr_24px] items-center"

const textBox = "mb-px block h-[20px] border border-[#7a7a7a] px-[2px] text-[11px]"

const skipOptions = [
  { label: "zdefiniowane komponenty", button: true },
  { label: "komponenty z folderów - drzewo SW", button: true },
  { label: "wszystkie foldery", button: false },
  { label: "komponenty ze ścieżki (ToolBox)", button: true },
]

const moveOptions = [
  { label: "Przenieś do folderu w zależności od Właściwości", checked: true },
  { label: "Przesuń foldery nad wiązania", checked: true },
  { label: "Wyklucz podzłożenia na podstawie Ścieżki", checked: false },
  { label: "Przenieś 'Wykluczone z listy materiałów' do folderu", checked: false },
]

const PathCells = ({ path, label }: { path: string; label: string }) => (
  <>
    <input type="text" aria-label={`Ścieżka ${label}`} defaultValue={path} className={`${textBox} mr-[13px] bg-white`} />
    <PushButton className="mb-px h-[20px]" label={`Wybierz ścieżkę ${label}`}>
      <LessThan />
    </PushButton>
  </>
)

const SortTreeDialog = () => (
  <div
    role="dialog"
    aria-label="SortTree"
    className="absolute top-[288px] right-[308px] left-[176px] border border-[#6a6a6a] bg-[#f7f7f7] font-['Liberation_Sans',sans-serif] text-[11px] leading-[14px] shadow-[0_4px_24px_rgba(0,0,0,0.45)]"
  >
    <div className="flex h-[30px] items-center bg-white pr-[10px] pb-px pl-[9px] font-['Noto_Sans',sans-serif] text-[11px]">
      <LogoIcon className="w-[14px] h-[15px]" />
      <h2 className="ml-[6px]">SortTree - tryb pracy dla aktywnego dokumentu</h2>
      <button type="button" aria-label="Zamknij" className="ml-auto">
        <svg viewBox="0 0 11 11" className="w-[11px] h-[11px]" stroke="#111" strokeWidth="1.200">
          <path d="M.500 .500l10 10M10.500 .500l-10 10" />
        </svg>
      </button>
    </div>

    <div className="pt-[6px] pr-[4px] pb-[6px] pl-[3px]">
      <div className="flex h-[20px] items-center pl-[5px]">
        <label htmlFor="level" className="w-[76px]">
          Poziom
        </label>
        <span className="flex h-[20px] w-[65px] border border-[#abadb3] bg-white">
          <input id="level" type="text" defaultValue="4" className="w-[48px] px-px pb-[2px] text-[12px]" />
          <span className="flex w-[15px] flex-col gap-px py-px">
            <button type="button" aria-label="Więcej" className="flex flex-1 items-center justify-center border border-[#c5c5c5] bg-[#efefef]">
              <svg viewBox="0 0 5 3" className="w-[5px] h-[3px]">
                <path d="M0 3h5L2.500 0z" />
              </svg>
            </button>
            <button type="button" aria-label="Mniej" className="flex flex-1 items-center justify-center border border-[#c5c5c5] bg-[#efefef]">
              <svg viewBox="0 0 5 3" className="w-[5px] h-[3px]">
                <path d="M0 0h5L2.500 3z" />
              </svg>
            </button>
          </span>
        </span>
        <label className="ml-[6px] flex items-center gap-[4px] pb-px">
          <CheckBox />
          tylko
        </label>
      </div>

      <Group title="Ścieżka procesu" className="mt-[9px]">
        <div className="flex items-center pt-[3px] pr-[5px] pb-[5px] pl-[5px]">
          <input
            type="text"
            readOnly
            aria-label="Ścieżka procesu"
            defaultValue="D:\Projekty\ADKSolid\Szafka UPS 2024"
            className="h-[20px] min-w-0 flex-1 border border-[#c8c8c8] bg-white px-[2px] text-[#6d6d6d]"
          />
          <PushButton className="ml-[7px] h-[24px] w-[28px]" label="Wybierz folder">
            <LessThan />
          </PushButton>
        </div>
      </Group>

      <Group title="Sortowanie" className="mt-[7px]">
        <div className="pt-[5px] pr-[8px] pb-[9px] pl-[6px]">
          <div className={rowGrid}>
            <span className="col-start-6">
              <Radio name="norm" label="Brak znormalizowanych" />
            </span>
            <Radio name="trade" label="Brak handlowych" />
            <Combo label="Lista" value="List: List 4" className="mr-[12px]" />
            <span className="pl-[2px]">Ścieżka</span>
          </div>
          {sortRows.map((row, i) => (
            <div key={i} className={rowGrid}>
              <span className="flex items-center gap-[4px] pb-px">
                <CheckBox checked={row.remove} label={`Usuń folder ${i + 1}`} />
                <YellowFolder crossed />
              </span>
              <span className="flex items-center gap-[4px] pb-px">
                <CheckBox checked={row.folder} label={`Utwórz folder ${i + 1}`} />
                <YellowFolder />
              </span>
              <input
                type="text"
                aria-label={`Nazwa folderu ${i + 1}`}
                defaultValue={row.name}
                className={`${textBox} mr-[10px] ${i === sortRows.length - 1 ? "bg-[#d7e4f2] shadow-[inset_0_0_0_1px_#fff]" : "bg-white"}`}
              />
              <span className="flex items-center gap-[3px] pb-px">
                <CheckBox checked={row.sort} label={`Sortuj ${i + 1}`} />
                <SortIcon />
              </span>
              <Combo label={`Sortuj według ${i + 1}`} value="Nazwa" className="mr-[23px]" />
              <Radio name="norm" checked={row.mode === "norm"} label={`Znormalizowane ${i + 1}`} />
              <Radio name="trade" checked={row.mode === "trade"} label={`Handlowe ${i + 1}`} />
              <Combo label={`Typ ${i + 1}`} value={row.type} className="mr-[12px]" />
              <PathCells path={row.path} label={`${i + 1}`} />
            </div>
          ))}
          {["Złożenia", "Części"].map((name, i) => (
            <div key={name} className={rowGrid}>
              <span className="col-start-2 pl-[15px]">
                <svg viewBox="0 0 18 18" className="w-[18px] h-[18px]" strokeWidth="1.200">
                  <path d="M9.500 .600h7.900v16.800H.600V9.500h8.900z" fill="#f8cb20" stroke="#4a3205" />
                  {i === 0 && <path d="M2.500 2.500h7v7h-7z" fill="#4cb84a" stroke="#4a3205" />}
                </svg>
              </span>
              <span className="pl-[2px]">{name}</span>
              <span className="flex items-center gap-[3px] pb-px">
                <CheckBox checked label={`Sortuj ${name}`} />
                <SortIcon />
              </span>
              <Combo label={`Sortuj ${name} według`} value="Nazwa" className="mr-[23px]" />
              <span>{i === 1 && <BoltIcon />}</span>
              <span className="-ml-[3px]">{i === 1 && <CartIcon />}</span>
              <Combo label={`Typ ${name}`} value="ADKSolid" className="mr-[12px]" />
              <PathCells path="" label={name} />
            </div>
          ))}
        </div>
      </Group>

      <div className="mt-[10px] flex pr-[8px] pl-[3px]">
        <Group title="Pomiń" className="w-[307px] shrink-0">
          <div className="pt-px pr-[7px] pb-[5px] pl-[5px]">
            {skipOptions.map((opt) => (
              <div key={opt.label} className="flex h-[34px] items-center justify-between">
                <label className="flex items-center gap-[4px]">
                  <CheckBox />
                  {opt.label}
                </label>
                {opt.button && (
                  <PushButton className="h-[27px] w-[28px]" label={`Lista: ${opt.label}`}>
                    <ListCheckIcon />
                  </PushButton>
                )}
              </div>
            ))}
          </div>
        </Group>

        <Group title="Opcje" className="ml-[5px] w-[545px] shrink-0">
          <div className="flex pt-px pr-[5px] pb-[5px] pl-[5px]">
            <div className="w-[360px]">
              {moveOptions.map((opt, i) => (
                <div key={opt.label} className="flex h-[34px] items-center">
                  <label className={`flex h-[30px] w-full items-center gap-[4px] ${i === 3 ? "bg-[#d7e4f2]" : ""}`}>
                    <CheckBox checked={opt.checked} />
                    {opt.label}
                  </label>
                </div>
              ))}
            </div>
            <Combo label="Właściwość" value="Prop.11: Typ" className="mt-[4px] ml-[6px] flex-1" />
          </div>
        </Group>

        <div className="flex flex-1 items-end justify-between pb-[6px] pl-[12px]">
          <label className="flex items-center gap-[4px]">
            <CheckBox />
            log
          </label>
          <div className="flex flex-col items-end pb-px">
            <div className="flex gap-[8px]">
              <PushButton className="h-[26px] w-[123px]">Kopiuj</PushButton>
              <PushButton className="h-[26px] w-[125px]">Wklej</PushButton>
            </div>
            <Combo label="Ustawienie" value="SortTree" className="mt-[13px] w-[258px]" />
            <div className="mt-[16px] flex gap-[8px]">
              <PushButton className="h-[28px] w-[123px]">Zapisz</PushButton>
              <PushButton className="h-[28px] w-[123px]">Uruchom</PushButton>
              <PushButton className="h-[28px] w-[125px]">Anuluj</PushButton>
            </div>
          </div>
        </div>
      </div>
    </div>
  </div>
)

/* ---------- step markers ---------- */

const Marker = ({ step, cx, cy, arrow, className }: { step: number; cx: number; cy: number; arrow: string; className: string }) => (
  <svg className={`pointer-events-none absolute overflow-visible drop-shadow-[2px_4px_3px_rgba(0,0,0,0.5)] ${className}`}>
    <path d={arrow} fill="#ff4545" />
    <ellipse cx={cx} cy={cy} rx="34" ry="31.500" fill="#ff4545" />
    <text x={cx} y={cy + 16} textAnchor="middle" fill="#fff" className="font-['Noto_Sans',sans-serif] text-[44px]">
      {step}
    </text>
  </svg>
)

export default function App() {
  return (
    <div className="relative flex min-h-screen flex-col bg-white font-['Noto_Sans',sans-serif] text-[11px] leading-[16px] text-black">
      <div className="h-[41px]" />
      <div className="flex flex-1 border-t border-[#808080]">
        <div className="flex min-w-0 flex-1 flex-col">
          <div className="flex flex-1">
            <LeftPanel />
            <Viewport />
          </div>
          <div className="mr-px flex h-[17px] border-t border-[#808080] bg-[#f7f7f7] pb-[3px]">
            <div className="ml-[2px] flex w-[64px] bg-[#b4b4b4]">
              {["M4 3v7M11 3 6 6.500l5 3.500z", "M10 3 5 6.500l5 3.500z", "M5 3l5 3.500L5 10z", "M4 3l5 3.500L4 10zM11 3v7"].map((d) => (
                <svg key={d} viewBox="0 0 15 13" className="h-[13px] w-[16px] border-r border-[#888]">
                  <path d={d} fill="#8b8b8b" stroke="#8b8b8b" />
                </svg>
              ))}
            </div>
            <button type="button" className="w-[57px] bg-[#f7f7f7] pl-[4px] leading-[13px] font-bold">
              Model
            </button>
            <button type="button" className="w-[113px] border border-t-0 border-[#808080] bg-[#d3d3d3] pr-[8px] leading-[12px]">
              Badanie ruchu 1
            </button>
          </div>
        </div>
        <RightPanel />
      </div>

      <SortTreeDialog />

      <Marker step={7} cx={44} cy={31} arrow="M31 56 9 90 6 88 7 105 22 96 18 94 40 58z" className="top-0 right-[550px] w-[80px] h-[105px]" />
      <Marker step={8} cx={58} cy={32} arrow="M28 45 12 63 8 58 2 75 20 73 16 69 38 54z" className="top-[92px] right-[438px] w-[92px] h-[76px]" />
      <Marker step={8} cx={36} cy={32} arrow="M48 60 94 109 89 114 111 119 106 98 101 103 58 55z" className="top-[733px] right-[549px] w-[114px] h-[122px]" />
    </div>
  )
}
